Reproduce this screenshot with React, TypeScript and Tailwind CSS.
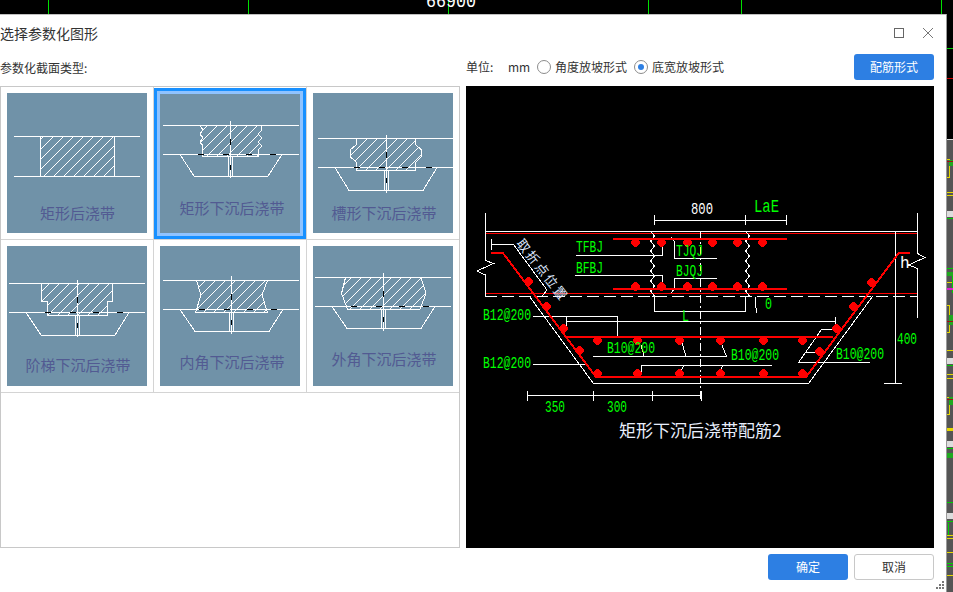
const CJK = "font-['Noto_Sans_CJK_SC','Liberation_Sans',sans-serif]";

type ThumbProps = {
    id: string;
    label: string;
    labelX: number;
    labelY: number;
    topY: number;
    midY: number;
    lineX: [number, number];
    centerX: number;
    centerTop: number;
    bottomY: number;
    shape: string;
    trough: [number, number, number, number];
};

const thumbs: ThumbProps[] = [
    {
        id: "b",
        label: "矩形下沉后浇带",
        labelX: 72,
        labelY: 114,
        topY: 32.5,
        midY: 61.5,
        lineX: [3, 139],
        centerX: 70.5,
        centerTop: 28,
        bottomY: 83,
        shape: "40,32.5 43,37 40,41 43,45 40,49 43,53 42,57 43,63.5 98,63.5 98,57 102,53 98,49 102,45 98,41 102,37 101,32.5",
        trough: [20, 34, 108, 122],
    },
    {
        id: "c",
        label: "槽形下沉后浇带",
        labelX: 71,
        labelY: 119,
        topY: 45.5,
        midY: 74.5,
        lineX: [5, 140],
        centerX: 73.5,
        centerTop: 42,
        bottomY: 97.5,
        shape: "43.5,45.5 43.5,51.5 37,57 37,63.5 43.5,69.5 43.5,77.5 102.5,77.5 102.5,69.5 108.5,63.5 108.5,57 102.5,51.5 102.5,45.5",
        trough: [22, 36, 110, 124],
    },
    {
        id: "d",
        label: "阶梯下沉后浇带",
        labelX: 71,
        labelY: 118,
        topY: 37.5,
        midY: 66.5,
        lineX: [2, 138],
        centerX: 70.5,
        centerTop: 34,
        bottomY: 89,
        shape: "34.5,37.5 34.5,55.5 40.5,55.5 40.5,69.5 100.5,69.5 100.5,55.5 105.5,55.5 105.5,37.5",
        trough: [19, 34, 108, 122],
    },
    {
        id: "e",
        label: "内角下沉后浇带",
        labelX: 72,
        labelY: 115,
        topY: 34.5,
        midY: 63.5,
        lineX: [3, 139],
        centerX: 71.5,
        centerTop: 30,
        bottomY: 85.5,
        shape: "36.5,34.5 41,49 35.5,66.5 107.5,66.5 102,49 107.5,34.5",
        trough: [20, 35, 109, 123],
    },
    {
        id: "f",
        label: "外角下沉后浇带",
        labelX: 71,
        labelY: 112,
        topY: 31.5,
        midY: 60.5,
        lineX: [2, 138],
        centerX: 70.5,
        centerTop: 27,
        bottomY: 82.5,
        shape: "32.5,31.5 28.5,47.5 34.5,63 107,63 113,47.5 108,31.5",
        trough: [19, 34, 108, 122],
    },
];

const Label = ({ x, y, text }: { x: number; y: number; text: string }) => (
    <text
        x={x}
        y={y}
        textAnchor="middle"
        dominantBaseline="central"
        fontSize={15}
        fill="#525a92"
    >
        {text}
    </text>
);

// plain rectangle section, no sunk trough
const RectThumb = () => (
    <svg
        width={140}
        height={140}
        shapeRendering="crispEdges"
        className={`shrink-0 bg-[#7092a8] ${CJK}`}
    >
        <defs>
            <pattern id="hatch-a" width={10} height={10} patternUnits="userSpaceOnUse">
                <path d="M0 10L10 0" stroke="#fff" strokeWidth={1} />
            </pattern>
        </defs>
        <rect x={33.5} y={43.5} width={74} height={40} fill="url(#hatch-a)" stroke="#fff" />
        <path d="M7 43.5H133M7 83.5H133" stroke="#fff" fill="none" />
        <Label x={70.5} y={119} text="矩形后浇带" />
    </svg>
);

const SinkThumb = ({
    id,
    label,
    labelX,
    labelY,
    topY,
    midY,
    lineX,
    centerX,
    centerTop,
    bottomY,
    shape,
    trough,
}: ThumbProps) => {
    const stubs = [-33, -8, 15, 39];
    return (
        <svg
            width={140}
            height={140}
            shapeRendering="crispEdges"
            className={`shrink-0 bg-[#7092a8] ${CJK}`}
        >
            <defs>
                <pattern id={`hatch-${id}`} width={10} height={10} patternUnits="userSpaceOnUse">
                    <path d="M0 10L10 0" stroke="#fff" strokeWidth={1} />
                </pattern>
            </defs>
            <polygon points={shape} fill={`url(#hatch-${id})`} stroke="#fff" />
            <path
                d={`M${lineX[0]} ${topY}H${lineX[1]}M${lineX[0]} ${midY}H${lineX[1]}`}
                stroke="#fff"
                fill="none"
            />
            <polyline
                points={`${trough[0]},${midY} ${trough[1]},${bottomY} ${trough[2]},${bottomY} ${trough[3]},${midY}`}
                stroke="#fff"
                fill="none"
            />
            <path
                d={`M${centerX} ${centerTop}V${bottomY + 2}M${centerX - 2} ${midY + 2}V${bottomY}M${centerX + 2} ${midY + 2}V${bottomY}`}
                stroke="#fff"
                fill="none"
            />
            {stubs.map((d) => (
                <rect key={d} x={centerX + d} y={midY - 0.5} width={6} height={1} fill="#000" />
            ))}
            <rect x={centerX - 0.5} y={midY - 16} width={1} height={6} fill="#000" />
            <rect x={centerX - 0.5} y={midY + 10} width={1} height={5} fill="#000" />
            <Label x={labelX} y={labelY} text={label} />
        </svg>
    );
};

const wavy = (x: number, y0: number, y1: number) => {
    const pts: string[] = [];
    let i = 0;
    for (let y = y0; y < y1; y += 5) {
        pts.push(`${x + (i % 2 === 0 ? -2 : 2)},${y}`);
        i++;
    }
    pts.push(`${x},${y1}`);
    return pts.join(" ");
};

const dots = [
    [528, 281], [546, 306], [563, 328], [579, 350], [597, 373],
    [635, 242], [661, 242], [687, 242], [712, 242], [737, 242], [762, 242],
    [635, 286], [661, 286], [687, 286], [712, 286], [737, 286], [762, 286],
    [597, 340], [637, 340], [679, 340], [720, 340], [763, 340], [802, 340],
    [637, 373], [679, 373], [720, 373], [763, 373], [802, 373],
    [819, 351], [836, 328], [853, 306], [871, 282],
];

const whiteLines = [
    "485.5,213 485.5,260.5 493.5,263.5 477,271 485.5,275 485.5,296.5",
    "917.5,213 917.5,253.5 925,257.5 908.5,265 917.5,268.5 917.5,317.5",
    "654.5,220.5 786.5,220.5",
    "654.5,215 654.5,225",
    "745.5,215 745.5,225",
    "786.5,215 786.5,225",
    "485,231.5 917,231.5",
    "654.5,297 654.5,311.5 745.5,311.5 745.5,297",
    "576,255.5 662.5,255.5 662.5,242",
    "575,275.5 662.5,275.5 662.5,285",
    "671.5,237.5 674.5,242 674.5,258.5 716.5,258.5",
    "671.5,293 674.5,288 674.5,278.5 716.5,278.5",
    "529.5,296.5 593.5,383.5 808.5,383.5 872.5,296.5",
    "566,321.5 835,321.5",
    "566,317 566,326",
    "835,317 835,326",
    "533,316.5 617.5,316.5 617.5,336",
    "533,364.5 586,364.5",
    "593,356.5 726.5,356.5 720,340",
    "644,356 641,345",
    "686,356 681,340",
    "641,371.5 641,365.5 771.5,365.5",
    "683.5,365.5 681,371.5",
    "722.5,365.5 720.5,371.5",
    "870,362.5 798.5,362.5 821.5,329.5 835,329.5",
    "805,352.5 817,352.5",
    "895.5,231 895.5,383.5",
    "884,383.5 901.5,383.5",
    "755,297 756.5,313",
    "527.5,395.5 701,395.5",
    "527.5,391 527.5,401",
    "593,391 593,401",
    "652,391 652,401",
    "701,391 701,401",
    "491.5,239 491.5,250",
    "491,244.5 513.5,244.5 547,290 542.5,296",
];

type Tag = { x: number; y: number; w: number; t: string; size?: number };

const greenText: Tag[] = [
    { x: 754, y: 207, w: 25, t: "LaE", size: 19 },
    { x: 576, y: 247.5, w: 27, t: "TFBJ" },
    { x: 576, y: 269, w: 27, t: "BFBJ" },
    { x: 676, y: 252, w: 27, t: "TJQJ" },
    { x: 676, y: 272, w: 27, t: "BJQJ" },
    { x: 682, y: 317, w: 7, t: "L" },
    { x: 483, y: 316, w: 48, t: "B12@200" },
    { x: 483, y: 364, w: 48, t: "B12@200" },
    { x: 607, y: 348.5, w: 48, t: "B10@200" },
    { x: 731, y: 356, w: 48, t: "B10@200" },
    { x: 836, y: 355, w: 48, t: "B10@200" },
    { x: 897, y: 339.5, w: 20, t: "400" },
    { x: 765, y: 304.5, w: 7, t: "0" },
    { x: 545, y: 408, w: 20, t: "350" },
    { x: 607, y: 408, w: 20, t: "300" },
];

// the reinforcement detail drawing on the right
const RebarDrawing = () => (
    <svg
        width={468}
        height={462}
        viewBox="466 86 468 462"
        shapeRendering="crispEdges"
        className={`bg-black shrink-0 ${CJK}`}
    >
        <path d="M485 233.5H917M485 293.5H917" stroke="#f00" fill="none" />
        <line x1={485} y1={296.5} x2={917} y2={296.5} stroke="#fff" strokeDasharray="12 5" />
        <line x1={700.5} y1={231} x2={700.5} y2={400} stroke="#fff" strokeDasharray="8 3 2 3" />
        {whiteLines.map((p) => (
            <polyline key={p} points={p} stroke="#fff" fill="none" />
        ))}
        <polyline points={wavy(652.5, 231, 297)} stroke="#fff" fill="none" />
        <polyline points={wavy(747.5, 231, 297)} stroke="#fff" fill="none" />
        <path
            d="M613 239H787M613 289H787M566 337H833"
            stroke="#f00"
            strokeWidth={2}
            fill="none"
        />
        <polyline
            points="491,252.5 502.5,252.5 596,377 806,377 899,252.5 910,252.5"
            stroke="#f00"
            strokeWidth={2}
            fill="none"
        />
        {dots.map(([x, y]) => (
            <path
                key={`${x}-${y}`}
                d={`M${x - 1} ${y - 4}h3v1h1v1h1v1h1v3h-1v1h-1v1h-1v1h-3v-1h-1v-1h-1v-1h-1v-3h1v-1h1v-1h1z`}
                fill="#f00"
            />
        ))}
        <g className="font-['Liberation_Mono',monospace]">
            {greenText.map((g) => (
                <text
                    key={`${g.t}-${g.x}`}
                    x={g.x}
                    y={g.y}
                    dominantBaseline="central"
                    fontSize={g.size ?? 16}
                    textLength={g.w}
                    lengthAdjust="spacingAndGlyphs"
                    fill="#00ff00"
                >
                    {g.t}
                </text>
            ))}
            <text
                x={691}
                y={209}
                dominantBaseline="central"
                fontSize={17}
                textLength={22}
                lengthAdjust="spacingAndGlyphs"
                fill="#fff"
            >
                800
            </text>
            <text x={900} y={264} dominantBaseline="central" fontSize={16} fill="#fff">
                h
            </text>
        </g>
        <text
            x={520}
            y={240}
            fontSize={13}
            letterSpacing={2}
            dominantBaseline="central"
            fill="#dfe8ff"
            transform="rotate(52 520 240)"
        >
            取折点位置
        </text>
        <text x={619} y={429} fontSize={17} dominantBaseline="central" fill="#e8eefc">
            矩形下沉后浇带配筋2
        </text>
    </svg>
);

const Radio = ({ checked, label }: { checked?: boolean; label: string }) => (
    <span className="flex items-center gap-[4px]">
        <span className="flex h-[14px] w-[14px] items-center justify-center rounded-full border border-[#8c8c8c] bg-white">
            {checked && <span className="h-[6px] w-[6px] rounded-full bg-[#2d7fe3]" />}
        </span>
        <span>{label}</span>
    </span>
);

// thin slice of the CAD window still visible behind the dialog
const SideStrip = () => (
    <svg width={7} height={578} viewBox="946 14 7 578" shapeRendering="crispEdges" className="shrink-0 bg-black">
        <rect x={946} y={14} width={1} height={578} fill="#9a9a9a" />
        <rect x={947} y={139} width={6} height={453} fill="#555" />
        <path d="M947 48.5H953" stroke="#00d000" />
        <path d="M947 78.5H953" stroke="#d00000" />
        <path d="M947 139.5H953" stroke="#ddd" />
        <path d="M947 159.5H949.5V177H947M947 192.5H953M947 195.5H953M947 282.5H953M947 305.5H949.5V332H947M947 350.5H953M947 374.5H953M947 378.5H953M947 397.5H949.5V414H947M947 535.5H953M947 538.5H953M947 552.5H953M947 575.5H953" stroke="#e6d800" fill="none" />
        <path d="M947 218.5H953M947 268.5H953M947 365.5H953M947 448.5H953M947 502.5H953M947 521.5H953M947 563.5H953M947 566.5H953M952.5 276V293M948.5 523V535" stroke="#00d000" fill="none" />
        <rect x={949} y={160} width={4} height={6} fill="#1faa1f" />
        <rect x={947} y={272} width={6} height={4} fill="#1faa1f" />
        <rect x={949} y={315} width={4} height={10} fill="#1faa1f" />
        <rect x={949} y={397} width={4} height={8} fill="#1faa1f" />
        <rect x={947} y={453} width={6} height={5} fill="#1faa1f" />
        <rect x={947} y={428} width={6} height={3} fill="#e6d800" />
        <rect x={947} y={288} width={6} height={2} fill="#e020d0" />
        <path d="M947 161.5H953M947 321.5H953M947 399.5H953" stroke="#a01010" />
        <rect x={947} y={211} width={6} height={6} fill="#ddd" />
        <rect x={947} y={358} width={6} height={6} fill="#ddd" />
        <rect x={947} y={441} width={6} height={6} fill="#ddd" />
        <rect x={947} y={513} width={6} height={6} fill="#ddd" />
    </svg>
);

const Cell = ({
    children,
    selected,
    last,
}: {
    children: React.ReactNode;
    selected?: boolean;
    last?: boolean;
}) => (
    <div
        className={`relative h-[153px] border-b border-[#d4d4d4] pl-[6px] ${last ? "w-[152px]" : "w-[153px] border-r"}`}
    >
        <div className={selected ? "pt-[6px]" : "pt-[6px]"}>{children}</div>
        {selected && (
            <div className="pointer-events-none absolute left-0 top-[1px] h-[151px] w-[152px] shadow-[inset_0_0_0_3px_#1890ff,inset_0_0_0_6px_#8fc3ff]" />
        )}
    </div>
);

export default function App() {
    return (
        <div className={`flex h-[592px] w-[953px] flex-col overflow-hidden bg-black text-[#333] ${CJK}`}>
            <svg width={953} height={14} shapeRendering="crispEdges" className="shrink-0 bg-black">
                <path d="M48.5 0V14M248.5 0V14M448.5 0V14M648.5 0V14M741.5 0V14M941.5 0V14" stroke="#00e000" />
                <text
                    x={426}
                    y={7}
                    fontSize={18}
                    textLength={50}
                    lengthAdjust="spacingAndGlyphs"
                    fill="#fff"
                    className="font-['Liberation_Mono',monospace]"
                >
                    66900
                </text>
            </svg>
            <div className="flex h-[578px]">
                <div className="relative flex w-[946px] flex-col border-t border-[#c0c0c0] bg-white">
                    <div className="flex h-[39px] shrink-0 items-center justify-between pb-[4px] pr-[12px]">
                        <span className="text-[14px] leading-none">选择参数化图形</span>
                        <div className="flex items-center gap-[18px]">
                            <span className="h-[10px] w-[10px] border border-[#666]" />
                            <svg width={12} height={12} viewBox="0 0 12 12" className="text-[#777]">
                                <path d="M1 1L11 11M11 1L1 11" stroke="currentColor" fill="none" />
                            </svg>
                        </div>
                    </div>
                    <div className="flex gap-[6px] pr-[11px]">
                        <div className="flex w-[460px] shrink-0 flex-col">
                            <div className="flex h-[32px] items-center pb-[4px] text-[12px] leading-none">
                                参数化截面类型:
                            </div>
                            <div className="h-[462px] border border-[#c8c8c8]">
                                <div className="flex">
                                    <Cell>
                                        <RectThumb />
                                    </Cell>
                                    <Cell selected>
                                        <SinkThumb {...thumbs[0]} />
                                    </Cell>
                                    <Cell last>
                                        <SinkThumb {...thumbs[1]} />
                                    </Cell>
                                </div>
                                <div className="flex">
                                    <Cell>
                                        <SinkThumb {...thumbs[2]} />
                                    </Cell>
                                    <Cell>
                                        <SinkThumb {...thumbs[3]} />
                                    </Cell>
                                    <Cell last>
                                        <SinkThumb {...thumbs[4]} />
                                    </Cell>
                                </div>
                            </div>
                        </div>
                        <div className="flex w-[468px] shrink-0 flex-col">
                            <div className="flex h-[32px] items-start justify-between">
                                <div className="flex h-[26px] items-center text-[12px] leading-none">
                                    <span className="w-[42px]">单位:</span>
                                    <span className="w-[29px]">mm</span>
                                    <span className="mr-[7px]">
                                        <Radio label="角度放坡形式" />
                                    </span>
                                    <Radio checked label="底宽放坡形式" />
                                </div>
                                <button className="h-[26px] w-[80px] rounded-[3px] bg-[#2d7fe3] text-[12px] text-white">
                                    配筋形式
                                </button>
                            </div>
                            <RebarDrawing />
                        </div>
                    </div>
                    <div className="flex justify-end gap-[6px] pr-[12px] pt-[6px]">
                        <button className="h-[26px] w-[80px] rounded-[3px] bg-[#2d7fe3] text-[12px] text-white">
                            确定
                        </button>
                        <button className="h-[26px] w-[80px] rounded-[3px] border border-[#c8c8c8] bg-white text-[12px] text-[#333]">
                            取消
                        </button>
                    </div>
                    <svg width={9} height={9} className="absolute bottom-[2px] right-[1px] text-[#777]">
                        <path
                            d="M6 0h2v2H6zM3 3h2v2H3zM6 3h2v2H6zM0 6h2v2H0zM3 6h2v2H3zM6 6h2v2H6z"
                            fill="currentColor"
                        />
                    </svg>
                </div>
                <SideStrip />
            </div>
        </div>
    );
}
